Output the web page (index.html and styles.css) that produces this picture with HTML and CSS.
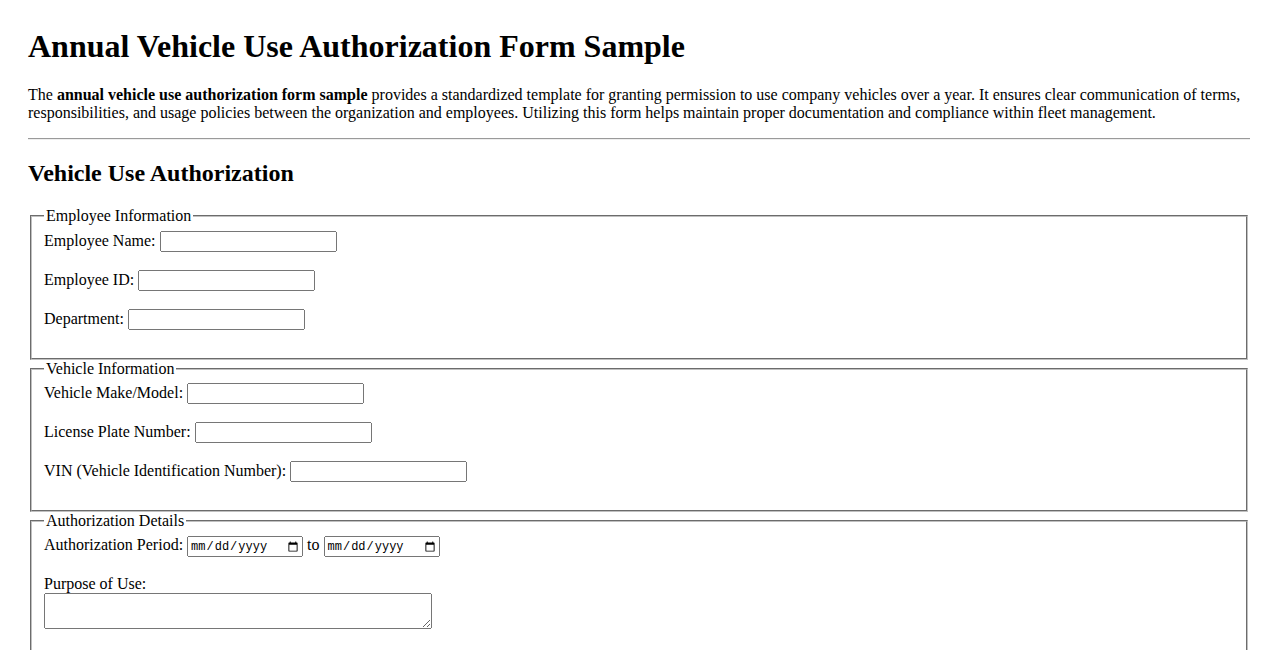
FILE: index.html
```html
<!DOCTYPE html>
<html lang="en">
<head>
<meta charset="utf-8">
<title>Annual Vehicle Use Authorization Form Sample</title>
<link rel="stylesheet" href="styles.css">
</head>
<body>
<div class="page">
  <h1 class="title">Annual Vehicle Use Authorization Form Sample</h1>
  <p class="intro">The <strong>annual vehicle use authorization form sample</strong> provides a standardized template for granting permission to use company vehicles over a year. It ensures clear communication of terms, responsibilities, and usage policies between the organization and employees. Utilizing this form helps maintain proper documentation and compliance within fleet management.</p>
  <hr class="divider">
  <h2 class="section-title">Vehicle Use Authorization</h2>
  <form class="form">
    <fieldset class="group">
      <legend class="group-title">Employee Information</legend>
      <div class="row"><label for="ename">Employee Name:</label> <input class="text" type="text" id="ename"></div>
      <div class="row"><label for="eid">Employee ID:</label> <input class="text" type="text" id="eid"></div>
      <div class="row"><label for="dept">Department:</label> <input class="text" type="text" id="dept"></div>
    </fieldset>
    <fieldset class="group">
      <legend class="group-title">Vehicle Information</legend>
      <div class="row"><label for="model">Vehicle Make/Model:</label> <input class="text" type="text" id="model"></div>
      <div class="row"><label for="plate">License Plate Number:</label> <input class="text" type="text" id="plate"></div>
      <div class="row"><label for="vin">VIN (Vehicle Identification Number):</label> <input class="text" type="text" id="vin"></div>
    </fieldset>
    <fieldset class="group">
      <legend class="group-title">Authorization Details</legend>
      <div class="row"><label for="start">Authorization Period:</label> <input class="date" type="date" id="start"> to <input class="date" type="date" id="end"></div>
      <div class="row"><label class="block-label" for="purpose">Purpose of Use:</label><textarea class="area" id="purpose"></textarea></div>
    </fieldset>
  </form>
</div>
</body>
</html>
```

FILE: styles.css
```css
body {
  margin: 8px;
  font-family: "Liberation Serif", "Times New Roman", serif;
  font-size: 16px;
  color: #000;
  background: #fff;
}

.page {
  padding: 20px;
}

.title {
  font-size: 32px;
  font-weight: bold;
  margin: 0 0 21px;
}

.intro {
  margin: 16px 0;
}

.divider {
  margin: 8px 0;
  border: 0;
  border-top: 1px solid #9a9a9a;
  border-bottom: 1px solid #eeeeee;
}

.section-title {
  font-size: 24px;
  font-weight: bold;
  margin: 20px 0;
}

.form {
  margin: 0;
}

.group {
  margin: 0 2px;
  padding: 5.6px 12px 10px;
  border: 2px groove #c0c0c0;
}

.group-title {
  padding: 0 2px;
}

.row {
  margin-bottom: 18px;
}

.block-label {
  display: block;
}

.text {
  box-sizing: border-box;
  width: 177px;
  height: 21px;
  font-family: "Liberation Sans", Arial, sans-serif;
  font-size: 13.333px;
}

.date {
  box-sizing: border-box;
  width: 116px;
  height: 21px;
  font-family: "Liberation Mono", "DejaVu Sans Mono", monospace;
  font-size: 12px;
}

.area {
  box-sizing: border-box;
  width: 388px;
  height: 36px;
  margin: 0;
  vertical-align: top;
  font-family: "Liberation Mono", monospace;
  font-size: 13.333px;
}
```
